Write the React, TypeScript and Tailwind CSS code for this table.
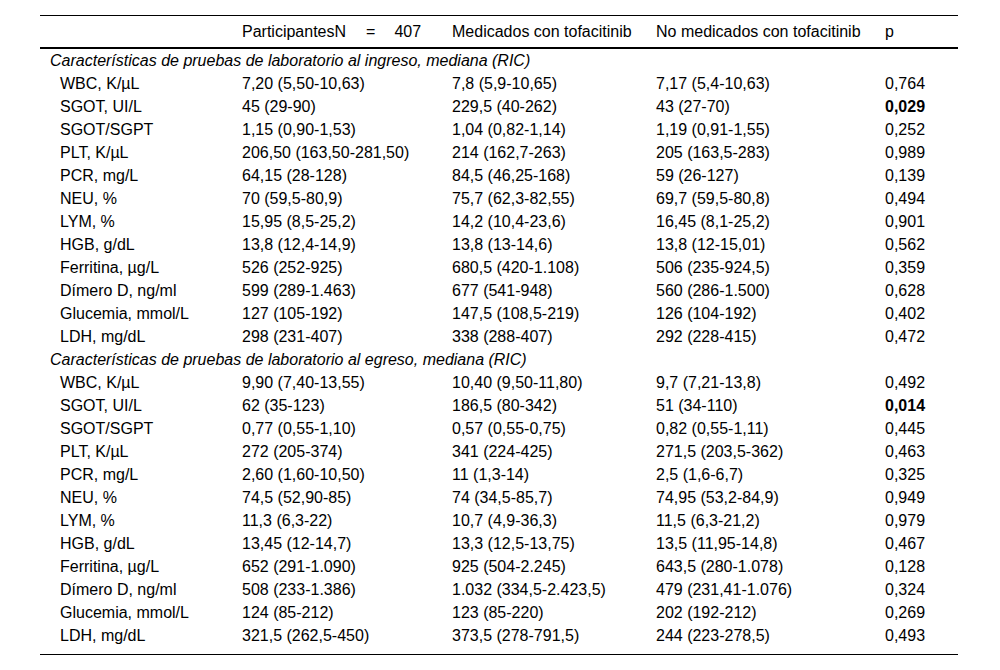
import React from "react";

type Row = [string, string, string, string, string, boolean?];

const ingreso: Row[] = [
  ["WBC, K/µL", "7,20 (5,50-10,63)", "7,8 (5,9-10,65)", "7,17 (5,4-10,63)", "0,764"],
  ["SGOT, UI/L", "45 (29-90)", "229,5 (40-262)", "43 (27-70)", "0,029", true],
  ["SGOT/SGPT", "1,15 (0,90-1,53)", "1,04 (0,82-1,14)", "1,19 (0,91-1,55)", "0,252"],
  ["PLT, K/µL", "206,50 (163,50-281,50)", "214 (162,7-263)", "205 (163,5-283)", "0,989"],
  ["PCR, mg/L", "64,15 (28-128)", "84,5 (46,25-168)", "59 (26-127)", "0,139"],
  ["NEU, %", "70 (59,5-80,9)", "75,7 (62,3-82,55)", "69,7 (59,5-80,8)", "0,494"],
  ["LYM, %", "15,95 (8,5-25,2)", "14,2 (10,4-23,6)", "16,45 (8,1-25,2)", "0,901"],
  ["HGB, g/dL", "13,8 (12,4-14,9)", "13,8 (13-14,6)", "13,8 (12-15,01)", "0,562"],
  ["Ferritina, µg/L", "526 (252-925)", "680,5 (420-1.108)", "506 (235-924,5)", "0,359"],
  ["Dímero D, ng/ml", "599 (289-1.463)", "677 (541-948)", "560 (286-1.500)", "0,628"],
  ["Glucemia, mmol/L", "127 (105-192)", "147,5 (108,5-219)", "126 (104-192)", "0,402"],
  ["LDH, mg/dL", "298 (231-407)", "338 (288-407)", "292 (228-415)", "0,472"],
];

const egreso: Row[] = [
  ["WBC, K/µL", "9,90 (7,40-13,55)", "10,40 (9,50-11,80)", "9,7 (7,21-13,8)", "0,492"],
  ["SGOT, UI/L", "62 (35-123)", "186,5 (80-342)", "51 (34-110)", "0,014", true],
  ["SGOT/SGPT", "0,77 (0,55-1,10)", "0,57 (0,55-0,75)", "0,82 (0,55-1,11)", "0,445"],
  ["PLT, K/µL", "272 (205-374)", "341 (224-425)", "271,5 (203,5-362)", "0,463"],
  ["PCR, mg/L", "2,60 (1,60-10,50)", "11 (1,3-14)", "2,5 (1,6-6,7)", "0,325"],
  ["NEU, %", "74,5 (52,90-85)", "74 (34,5-85,7)", "74,95 (53,2-84,9)", "0,949"],
  ["LYM, %", "11,3 (6,3-22)", "10,7 (4,9-36,3)", "11,5 (6,3-21,2)", "0,979"],
  ["HGB, g/dL", "13,45 (12-14,7)", "13,3 (12,5-13,75)", "13,5 (11,95-14,8)", "0,467"],
  ["Ferritina, µg/L", "652 (291-1.090)", "925 (504-2.245)", "643,5 (280-1.078)", "0,128"],
  ["Dímero D, ng/ml", "508 (233-1.386)", "1.032 (334,5-2.423,5)", "479 (231,41-1.076)", "0,324"],
  ["Glucemia, mmol/L", "124 (85-212)", "123 (85-220)", "202 (192-212)", "0,269"],
  ["LDH, mg/dL", "321,5 (262,5-450)", "373,5 (278-791,5)", "244 (223-278,5)", "0,493"],
];

const cols = "grid grid-cols-[192px_210px_204px_229px_83px]";

const DataRow = ({ row }: { row: Row }) => (
  <div className={`${cols} h-[23px] leading-[23px]`}>
    <div className="pl-[20px] whitespace-nowrap">{row[0]}</div>
    <div className="pl-[10px] whitespace-nowrap">{row[1]}</div>
    <div className="pl-[10px] whitespace-nowrap">{row[2]}</div>
    <div className="pl-[10px] whitespace-nowrap">{row[3]}</div>
    <div className={`pl-[10px] whitespace-nowrap ${row[5] ? "font-bold" : ""}`}>{row[4]}</div>
  </div>
);

const Section = ({ title, rows }: { title: string; rows: Row[] }) => (
  <>
    <div className="h-[23px] leading-[23px] pl-[10px] italic whitespace-nowrap">{title}</div>
    {rows.map((r) => (
      <DataRow key={title + r[0]} row={r} />
    ))}
  </>
);

export default function App() {
  return (
    <div className="w-[1000px] h-[670px] bg-white pt-[15px] pl-[40px] text-black text-[16px] font-['Liberation_Sans',Arial,sans-serif]">
      <div className="w-[918px] border-t border-black border-b">
        {/* cabecera */}
        <div className={`${cols} h-[33px] leading-[32px] border-b-2 border-black`}>
          <div />
          <div className="pl-[10px] whitespace-nowrap">
            ParticipantesN<span className="ml-[20px]">=</span>
            <span className="ml-[19px]">407</span>
          </div>
          <div className="pl-[10px] whitespace-nowrap">Medicados con tofacitinib</div>
          <div className="pl-[10px] whitespace-nowrap">No medicados con tofacitinib</div>
          <div className="pl-[10px]">p</div>
        </div>
        <Section
          title="Características de pruebas de laboratorio al ingreso, mediana (RIC)"
          rows={ingreso}
        />
        <Section
          title="Características de pruebas de laboratorio al egreso, mediana (RIC)"
          rows={egreso}
        />
        <div className="h-[7px]" />
      </div>
    </div>
  );
}
